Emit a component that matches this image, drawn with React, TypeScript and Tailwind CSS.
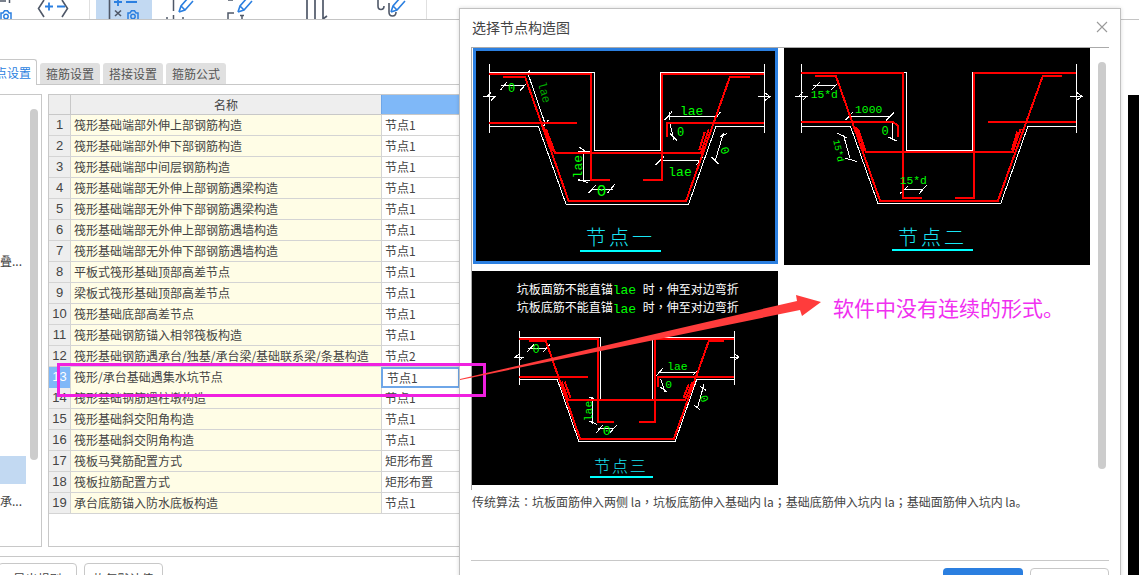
import React from "react";

const rows: [string, string][] = [
  ["筏形基础端部外伸上部钢筋构造", "节点1"],
  ["筏形基础端部外伸下部钢筋构造", "节点1"],
  ["筏形基础端部中间层钢筋构造", "节点1"],
  ["筏形基础端部无外伸上部钢筋遇梁构造", "节点1"],
  ["筏形基础端部无外伸下部钢筋遇梁构造", "节点1"],
  ["筏形基础端部无外伸上部钢筋遇墙构造", "节点1"],
  ["筏形基础端部无外伸下部钢筋遇墙构造", "节点1"],
  ["平板式筏形基础顶部高差节点", "节点1"],
  ["梁板式筏形基础顶部高差节点", "节点1"],
  ["筏形基础底部高差节点", "节点1"],
  ["筏形基础钢筋锚入相邻筏板构造", "节点1"],
  ["筏形基础钢筋遇承台/独基/承台梁/基础联系梁/条基构造", "节点2"],
  ["筏形/承台基础遇集水坑节点", "节点1"],
  ["筏形基础钢筋遇柱墩构造", "节点1"],
  ["筏形基础斜交阳角构造", "节点1"],
  ["筏形基础斜交阴角构造", "节点1"],
  ["筏板马凳筋配置方式", "矩形布置"],
  ["筏板拉筋配置方式", "矩形布置"],
  ["承台底筋锚入防水底板构造", "节点1"],
];

const MONO = "'Liberation Mono', monospace";
const CJK = "'Noto Sans CJK SC', sans-serif";
const CJK_CENTERED = "'Noto Sans CJK TC', sans-serif";

function Pencil({ x }: { x: number }) {
  return (
    <path
      transform={`translate(${x} 0)`}
      d="M1 12 L3 6 L10 -2 M1 12 L7 10 L15 1 M3 6 L7 10"
      fill="none"
      stroke="#2b7fe0"
      strokeWidth="1.6"
    />
  );
}

function Camera({ x, y }: { x: number; y: number }) {
  return (
    <g transform={`translate(${x} ${y})`} fill="none" stroke="#2b7fe0" strokeWidth="1.5">
      <path d="M1 9 V3 H3 L4.5 0.8 H7.5 L9 3 H11 V9" />
      <circle cx="6" cy="6.5" r="2.2" />
    </g>
  );
}

function Punct({ c }: { c: string }) {
  return <span className="font-['Noto_Sans_CJK_TC',sans-serif]">{c}</span>;
}

function Cad({
  box,
  white,
  thin,
  red,
  labels,
  title,
  titleX,
  titleY,
  titleSize,
  titleGap,
  under,
  extra,
}: {
  box: [number, number, number, number];
  white: string;
  thin: string;
  red: string;
  labels: { t: string; x: number; y: number; s?: number; r?: number; c?: string }[];
  title: string;
  titleX: number;
  titleY: number;
  titleSize: number;
  titleGap: number;
  under: [number, number, number];
  extra?: React.ReactNode;
}) {
  return (
    <svg
      viewBox={box.join(" ")}
      width={box[2] / 3}
      height={box[3] / 3}
      className="block bg-black"
    >
      <g fill="none" shapeRendering="crispEdges">
        <path d={white} stroke="#fff" strokeWidth="3" />
        <path d={thin} stroke="#fff" strokeWidth="3" />
        <path d={red} stroke="#ff0000" strokeWidth="6" />
      </g>
      {labels.map((l, i) => (
        <text
          key={i}
          x={l.x}
          y={l.y}
          fontFamily={MONO}
          fontSize={l.s ?? 39}
          fill={l.c ?? "#00ff00"}
          textAnchor="middle"
          transform={l.r ? `rotate(${l.r} ${l.x} ${l.y})` : undefined}
        >
          {l.t}
        </text>
      ))}
      {extra}
      <text
        x={titleX}
        y={titleY}
        fontFamily={CJK}
        fontSize={titleSize}
        letterSpacing={titleGap}
        fill="#19e6f5"
        fontWeight="300"
      >
        {title}
      </text>
      <path
        d={`M${under[0]} ${under[2]} H${under[1]}`}
        stroke="#00ffff"
        strokeWidth="6"
        shapeRendering="crispEdges"
      />
    </svg>
  );
}

export default function App() {
  return (
    <div className="relative w-[1139px] h-[575px] overflow-hidden bg-white font-['Noto_Sans_CJK_SC',sans-serif] text-[12px] text-[#444]">
      {/* toolbar */}
      <div className="flex h-[20px] border-b border-[#c4c4c4] overflow-hidden">
        <div className="w-[90px] shrink-0 border-r border-[#e0e0e0]">
          <svg width="89" height="19" className="block">
            <path d="M0 1 H6 M9.5 0 V3" stroke="#4f5868" strokeWidth="1.5" fill="none" />
            <Camera x={0} y={10} />
            <path d="M44 0 L38.5 8.5 L44 17 M62 0 L67.5 8.5 L62 17" stroke="#4f5868" strokeWidth="1.6" fill="none" />
            <path d="M45 6.5 H53 M49 2.5 V10.5 M57 6.5 H65" stroke="#2b7fe0" strokeWidth="1.8" fill="none" />
          </svg>
        </div>
        <div className="ml-[6px] w-[56px] shrink-0 bg-[#c2d9f2]">
          <svg width="56" height="19" className="block">
            <path d="M13.5 0 V19" stroke="#4f5868" strokeWidth="1.6" />
            <path d="M18 2 H26 M22 -2 V6 M30 2 H41" stroke="#2b7fe0" strokeWidth="1.8" fill="none" />
            <path d="M19 10.5 L25 16 M25 10.5 L19 16" stroke="#4f5868" strokeWidth="1.6" />
            <Camera x={31} y={10} />
          </svg>
        </div>
        <div className="w-[275px] shrink-0 border-r border-[#e0e0e0]">
          <svg viewBox="152 0 275 19" width="275" height="19" className="block">
            <path d="M173.5 0 V11 M173.5 15 V19 M167 17 V19 M183 17 V19" stroke="#4f5868" strokeWidth="1.5" fill="none" />
            <Pencil x={178} />
            <path d="M234 13 H228 V19 M240 15.5 H244 M242 15.5 V19 M228 0 H233" stroke="#4f5868" strokeWidth="1.5" fill="none" />
            <Pencil x={237} />
            <path d="M307 0 V19 M315 0 V19 M323 0 V19 M323 19 L327 16" stroke="#4f5868" strokeWidth="1.7" fill="none" />
            <path d="M378 0 V6 Q378 9.5 381 9.5 Q384 9.5 384 6 M389 3 V12 Q389 16 392.5 16 Q396 16 396 12" stroke="#4f5868" strokeWidth="1.6" fill="none" />
            <Pencil x={390} />
          </svg>
        </div>
      </div>

      {/* settings page */}
      <div className="w-[460px] h-[555px] border-r border-[#c4c4c4] pt-[39px]">
        <div className="flex items-end h-[26px] border-b border-[#c8c8c8]">
          <div className="relative top-px flex justify-end w-[37px] h-[26px] overflow-hidden whitespace-nowrap items-center pr-[5px] bg-white border-t border-r border-[#c8c8c8] rounded-tr-[3px] text-[#2b7fe0] leading-[24px]">
            节点设置
          </div>
          {["箍筋设置", "搭接设置", "箍筋公式"].map((t) => (
            <div
              key={t}
              className="ml-[3px] w-[60px] h-[21px] bg-[#e0e0e0] rounded-t-[3px] text-center text-[#555] leading-[21px] first:ml-[4px]"
            >
              {t}
            </div>
          ))}
        </div>

        <div className="flex mt-[9px] h-[453px]">
          {/* left tree */}
          <div className="flex w-[42px] shrink-0 border-t border-r border-b border-[#c8c8c8]">
            <div className="w-[26px] shrink-0 overflow-hidden">
              <div className="mt-[158px] h-[16px] leading-[16px] whitespace-nowrap">叠...</div>
              <div className="mt-[187px] h-[28px] bg-[#c2d9f2]" />
              <div className="mt-[9px] h-[16px] leading-[16px] whitespace-nowrap">承...</div>
            </div>
            <div className="ml-[4px] mt-[14px] w-[8px] h-[351px] rounded-[4px] bg-[#cccccc]" />
          </div>

          {/* table */}
          <div className="ml-[6px] w-[412px] border-t border-l border-b border-[#c8c8c8]">
            <div className="grid grid-cols-[22px_310px_79px] h-[20px] leading-[19px] border-b border-[#c8c8c8]">
              <div className="bg-[#eeeeee] border-r border-[#c8c8c8]" />
              <div className="bg-[#eeeeee] text-center">名称</div>
              <div className="bg-[#7fb8f8] border-l border-[#6ea6e8]" />
            </div>
            {rows.map(([name, val], i) => {
              const sel = i === 12;
              return (
                <div
                  key={i}
                  className="grid grid-cols-[22px_310px_79px] h-[21px] leading-[20px] border-b border-[#d4d4d4]"
                >
                  <div
                    className={
                      sel
                        ? "bg-[#7fb8f8] text-white text-center border-r border-[#d4d4d4] font-['Liberation_Sans',sans-serif] text-[13px]"
                        : "bg-[#eeeeee] text-center border-r border-[#d4d4d4] font-['Liberation_Sans',sans-serif] text-[13px]"
                    }
                  >
                    {i + 1}
                  </div>
                  <div className="bg-[#fffde6] pl-[3px] whitespace-nowrap">{name}</div>
                  <div
                    className={
                      sel
                        ? "h-[21px] border-2 border-[#6ea6e8] pl-[4px] leading-[17px] whitespace-nowrap"
                        : "border-l border-[#d4d4d4] pl-[3px] whitespace-nowrap"
                    }
                  >
                    {val}
                  </div>
                </div>
              );
            })}
          </div>
        </div>

        <div className="mt-[9px] border-t border-[#c8c8c8] flex pt-[6px]">
          <div className="ml-[-2px] w-[79px] h-[32px] border border-[#c8c8c8] rounded-[4px] text-center leading-[30px]">
            导出规则
          </div>
          <div className="ml-[7px] w-[79px] h-[32px] border border-[#c8c8c8] rounded-[4px] text-center leading-[30px]">
            恢复默认值
          </div>
        </div>
      </div>

      {/* black strip of the window behind */}
      <div className="absolute right-0 top-[95px] bottom-0 w-[11px] bg-black" />

      {/* dialog */}
      <div className="absolute left-[459px] top-[8px] w-[662px] h-[600px] bg-white border border-[#c0c0c0] shadow-[0_0_4px_rgba(0,0,0,0.15)]">
        <div className="flex items-center justify-between h-[38px] pl-[12px] pr-[12px] pb-[3px]">
          <span className="text-[14px] text-[#444] leading-[20px]">选择节点构造图</span>
          <svg width="12" height="12" viewBox="0 0 12 12" className="block">
            <path d="M1 1 L11 11 M11 1 L1 11" stroke="#9a9a9a" strokeWidth="1.1" />
          </svg>
        </div>

        <div className="ml-[11px] w-[638px] h-[443px] border-t border-l border-[#aaaaaa] flex">
          <div className="w-[619px] shrink-0">
            <div className="flex">
              <div className="ml-[1px] w-[305px] h-[216px] border-[3px] border-[#2b7fe0] overflow-hidden">
                <Cad
                  box={[18, 33, 897, 630]}
                  white="M58 97 H372 V331 H570 V97 H884 M58 72 V280 M884 72 V280 M58 259 H205 L288 492 H656 L738 259 H884"
                  thin="M40 170 H78 M62 158 L50 170 M62 182 L75 170 M864 170 H902 M884 158 L900 170 L884 182 M92 137 H165 M92 150 L112 125 M150 152 L172 128 M172 95 L225 250 M165 105 L180 92 M218 262 L235 240 M590 229 H740 M584 240 L606 215 M730 245 L752 215 M597 215 V240 M598 245 L612 300 M600 280 L622 302 M760 280 L735 365 M750 290 L772 280 M725 352 L745 372 M570 361 H690 M556 375 L582 350 M678 375 L700 350 M340 330 V420 M328 322 L355 340 M325 418 L355 428 M325 335 H362 M325 421 H362 M365 447 H430 M355 460 L378 435 M412 460 L435 432"
                  red="M58 101 H362 V420 H420 M58 248 H320 M100 110 H165 L296 483 H648 L780 110 H840 M882 101 H576 V420 H520 M590 290 V248 H882 M228 268 L255 338 H693 L716 268 M222 262 L248 334 M704 276 L688 330"
                  labels={[
                    { t: "0", x: 125, y: 157, s: 36 },
                    { t: "lae", x: 212, y: 160, s: 36, r: 75, c: "#00a800" },
                    { t: "lae", x: 665, y: 224 },
                    { t: "0", x: 632, y: 287, s: 36 },
                    { t: "0", x: 754, y: 336, s: 36, r: 70 },
                    { t: "lae", x: 335, y: 380, s: 39, r: -90 },
                    { t: "lae", x: 630, y: 407 },
                    { t: "0", x: 395, y: 467, s: 48 },
                  ]}
                  title="节点一"
                  titleX={348}
                  titleY={616}
                  titleSize={60}
                  titleGap={9}
                  under={[330, 573, 632]}
                />
              </div>
              <div className="ml-[6px] w-[306px] h-[217px] overflow-hidden">
                <Cad
                  box={[12, 25, 918, 651]}
                  white="M64 97 H378 V331 H576 V97 H890 M64 72 V280 M890 72 V280 M64 259 H211 L294 492 H662 L744 259 H890"
                  thin="M46 170 H84 M68 158 L56 170 M68 182 L81 170 M870 170 H908 M890 158 L906 170 L890 182 M100 138 H165 M96 150 L120 128 M155 150 L176 128 M205 229 H330 M196 242 L218 218 M318 242 L342 218 M338 250 V295 M325 292 L350 304 M325 248 L352 252 M190 285 L210 355 M172 280 L202 295 M196 356 L230 365 M370 450 H428 M360 462 L385 438 M418 462 L440 436"
                  red="M64 101 H370 V474 H426 M64 248 H340 L354 258 V292 M106 110 H168 L300 483 H654 L788 110 H846 M888 101 H582 V474 H526 M888 248 H624 M234 268 L258 338 H698 L722 268 M228 262 L254 334 M712 276 L696 330"
                  labels={[
                    { t: "15*d", x: 133, y: 174, s: 34 },
                    { t: "1000", x: 266, y: 219, s: 34 },
                    { t: "0", x: 315, y: 287, s: 36 },
                    { t: "15*d", x: 167, y: 335, s: 28, r: 78 },
                    { t: "15*d", x: 400, y: 432, s: 34 },
                  ]}
                  title="节点二"
                  titleX={354}
                  titleY={616}
                  titleSize={60}
                  titleGap={9}
                  under={[336, 579, 632]}
                />
              </div>
            </div>
            <div className="mt-[6px] w-[306px] h-[214px] overflow-hidden">
              <Cad
                box={[6, 10, 918, 642]}
                white="M148 210 H392 V395 H548 V210 H793 M148 190 V352 M793 190 V352 M148 336 H262 L326 520 H616 L680 336 H793"
                thin="M132 268 H162 M148 258 L136 268 M148 278 L160 268 M780 268 H808 M793 258 L806 268 L793 278 M175 241 H232 M172 252 L192 230 M220 252 L240 230 M565 313 H680 M560 324 L578 302 M670 322 L690 300 M572 335 L585 372 M570 358 L592 374 M702 350 L682 422 M690 356 L708 368 M672 412 L690 426 M368 388 V468 M358 388 L380 398 M358 460 L380 470 M385 482 H432 M380 495 L398 472 M420 495 L440 472"
                red="M148 213 H385 V462 H432 M148 329 H353 M178 221 H228 L330 513 H612 L716 221 H762 M793 213 H555 V462 H508 M565 358 V329 H793 M275 342 L295 398 H645 L668 342 M284 342 L302 392 M656 350 L640 392"
                labels={[
                  { t: "0", x: 198, y: 256, s: 36 },
                  { t: "lae", x: 622, y: 308, s: 34 },
                  { t: "0", x: 596, y: 360, s: 34 },
                  { t: "0", x: 692, y: 397, s: 34, r: 70 },
                  { t: "lae", x: 366, y: 430, s: 34, r: -90 },
                  { t: "0", x: 410, y: 503, s: 40 },
                ]}
                title="节点三"
                titleX={373}
                titleY={612}
                titleSize={48}
                titleGap={5}
                under={[360, 549, 629]}
                extra={
                  <>
                    <text x={140} y={80} fontFamily={CJK} fontSize={36} fill="#fff">坑板面筋不能直锚</text>
                    <text x={428} y={80} fontFamily={MONO} fontSize={39} fill="#00ff00">lae</text>
                    <text x={518} y={80} fontFamily={CJK} fontSize={36} fill="#fff">时<tspan fontFamily={CJK_CENTERED}>{"\uFF0C"}</tspan>伸至对边弯折</text>
                    <text x={140} y={132} fontFamily={CJK} fontSize={36} fill="#fff">坑板底筋不能直锚</text>
                    <text x={428} y={135} fontFamily={MONO} fontSize={39} fill="#00ff00">lae</text>
                    <text x={518} y={132} fontFamily={CJK} fontSize={36} fill="#fff">时<tspan fontFamily={CJK_CENTERED}>{"\uFF0C"}</tspan>伸至对边弯折</text>
                  </>
                }
              />
            </div>
          </div>
          <div className="ml-[7px] mt-[14px] w-[8px] h-[407px] rounded-[4px] bg-[#cccccc]" />
        </div>

        <div className="ml-[12px] mt-[2px] h-[20px] leading-[20px] text-[12px] whitespace-nowrap">
          传统算法<Punct c={"\uFF1A"} />坑板面筋伸入两侧 la<Punct c={"\uFF0C"} />坑板底筋伸入基础内 la<Punct c={"\uFF1B"} />基础底筋伸入坑内 la<Punct c={"\uFF1B"} />基础面筋伸入坑内 la。
        </div>

        <div className="ml-[11px] mt-[48px] w-[638px] border-t border-[#c8c8c8] flex justify-end gap-[7px] pt-[7px]">
          <div className="w-[80px] h-[32px] rounded-[4px] bg-[#2b7fe0] text-white text-center leading-[32px]">确定</div>
          <div className="w-[79px] h-[32px] rounded-[4px] border border-[#c8c8c8] text-center leading-[30px]">取消</div>
        </div>
      </div>

      {/* annotations */}
      <div className="absolute left-[57px] top-[363px] w-[429px] h-[34px] border-[3px] border-[#f020e0]" />
      <svg className="absolute left-0 top-0 pointer-events-none" width="1139" height="575">
        <polygon points="460,379 797,301 796,295 821,302 802,316 800,310 460,380" fill="#ff3c3c" />
      </svg>
      <div className="absolute left-[833px] top-[293px] text-[21px] leading-[28px] whitespace-nowrap text-[#f030f0]">
        软件中没有连续的形式。
      </div>
    </div>
  );
}
